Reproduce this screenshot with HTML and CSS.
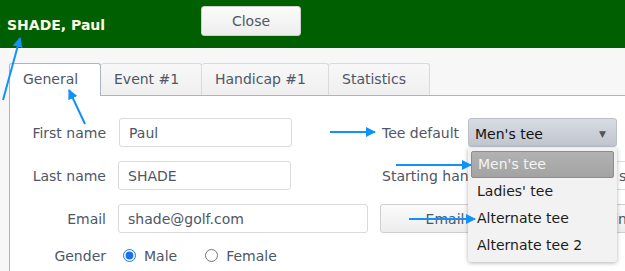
FILE: index.html
```html
<!DOCTYPE html>
<html lang="en">
<head>
    <meta charset="UTF-8">
    <title>Player - SHADE, Paul</title>
    <link rel="stylesheet" href="styles.css">
</head>
<body>
    <header class="top-bar">
        <span class="player-name">SHADE, Paul</span>
        <button class="btn close-btn">Close</button>
    </header>

    <main class="player-page">
        <nav class="tabs">
            <div class="tab active">General</div>
            <div class="tab">Event #1</div>
            <div class="tab wide">Handicap #1</div>
            <div class="tab">Statistics</div>
        </nav>

        <section class="panel">
            <div class="form-grid">
                <label class="field-label">First name</label>
                <div class="field"><input class="text-input short" type="text" value="Paul"></div>
                <label class="side-label">Tee default</label>
                <div class="select-wrap">
                    <div class="select-box">
                        <span>Men's tee</span>
                        <span class="caret">&#9660;</span>
                    </div>
                    <!-- open options list -->
                    <ul class="select-list">
                        <li class="option selected">Men's tee</li>
                        <li class="option">Ladies' tee</li>
                        <li class="option">Alternate tee</li>
                        <li class="option">Alternate tee 2</li>
                    </ul>
                </div>

                <label class="field-label">Last name</label>
                <div class="field"><input class="text-input short" type="text" value="SHADE"></div>
                <div class="side-row">
                    <span class="side-label hcp-label">Starting handicap</span>
                    <input class="text-input hcp-input" type="text" value="std">
                </div>

                <label class="field-label">Email</label>
                <div class="field"><input class="text-input" type="text" value="shade@golf.com"></div>
                <div class="side-row">
                    <button class="btn email-btn">Email</button>
                    <button class="btn email-btn login-btn">Login</button>
                </div>

                <label class="field-label">Gender</label>
                <div class="field radios">
                    <label class="radio"><input type="radio" name="gender" checked> Male</label>
                    <label class="radio"><input type="radio" name="gender"> Female</label>
                </div>
            </div>
        </section>
    </main>

    <!-- help arrows drawn over the screen -->
    <svg class="help-arrows" width="625" height="271" viewBox="0 0 625 271">
        <defs>
            <marker id="head" viewBox="0 0 10 10" refX="9" refY="5" markerWidth="5" markerHeight="5" orient="auto">
                <path d="M0,0 L10,5 L0,10 z" fill="#1191fa"/>
            </marker>
        </defs>
        <line x1="3" y1="100" x2="20" y2="38" marker-end="url(#head)"/>
        <line x1="85" y1="124" x2="69" y2="90" marker-end="url(#head)"/>
        <line x1="330" y1="132" x2="375" y2="132" marker-end="url(#head)"/>
        <line x1="396" y1="165" x2="471" y2="165" marker-end="url(#head)"/>
        <line x1="409" y1="219" x2="475" y2="219" marker-end="url(#head)"/>
    </svg>
</body>
</html>
```

FILE: styles.css
```css
html, body {
    width: 625px;
    height: 271px;
}

body {
    margin: 0;
    font-family: "DejaVu Sans", Verdana, sans-serif;
    font-size: 14px;
    background: #f7f7f7;
    color: #4f5666;
    overflow: hidden;
}

.top-bar {
    display: flex;
    align-items: center;
    height: 48px;
    padding-left: 7px;
    background: #005f00;
}

.player-name {
    width: 194px;
    font-weight: bold;
    color: #fffbe3;
    margin-top: 2px;
}

.btn {
    font-family: inherit;
    font-size: 14px;
    color: #4f5666;
    background: linear-gradient(#fbfbfb, #ededed);
    border: 1px solid #cfcfcf;
    border-radius: 3px;
    cursor: pointer;
}

.close-btn {
    width: 100px;
    height: 30px;
    margin-top: -6px;
}

.player-page {
    padding: 15px 0 0 9px;
}

.tabs {
    display: flex;
    height: 32px;
}

.tab {
    box-sizing: border-box;
    width: 101px;
    padding-top: 7px;
    padding-left: 13px;
    border: 1px solid #d9dadc;
    border-bottom: none;
    border-left: none;
    border-radius: 3px 3px 0 0;
    background: linear-gradient(#f8f8f8, #efefef);
}

.tab.active {
    width: 92px;
    border: 1px solid #aeb4bd;
    border-bottom: none;
    background: #fff;
    position: relative;
    z-index: 1;
    height: 33px;
}

.tab.wide {
    width: 127px;
}

.panel {
    background: #fff;
    border-top: 1px solid #aeb4bd;
    border-left: 1px solid #aeb4bd;
    height: 154px;
    padding-top: 22px;
    overflow: hidden;
}

.form-grid {
    display: grid;
    grid-template-columns: 96px 250px 76px 149px;
    grid-template-rows: 29px 29px 29px 17px;
    column-gap: 12px;
    row-gap: 14px;
}

.form-grid > :nth-child(2) {
    margin-left: 1px;
}

.field-label {
    text-align: right;
    align-self: center;
}

.field {
    display: flex;
    align-items: center;
}

.text-input {
    box-sizing: border-box;
    width: 250px;
    height: 29px;
    padding: 0 9px;
    font-family: inherit;
    font-size: 14px;
    color: #4f5666;
    border: 1px solid #dadada;
    border-radius: 3px;
    background: #fff;
}

.text-input.short {
    width: 173px;
}

.side-label {
    align-self: center;
    white-space: nowrap;
    padding-left: 2px;
}

.side-row {
    grid-column: 3 / 5;
    display: flex;
    align-items: center;
    gap: 10px;
    white-space: nowrap;
}

.hcp-label {
    width: 217px;
    flex: none;
}

.hcp-input {
    width: 120px;
    flex: none;
}

.email-btn {
    flex: none;
    height: 29px;
    width: 132px;
    padding-left: 4px;
}

.login-btn {
    width: 110px;
    text-align: right;
    padding-right: 4px;
}

.select-wrap {
    position: relative;
}

.select-box {
    box-sizing: border-box;
    height: 29px;
    display: flex;
    align-items: center;
    justify-content: space-between;
    padding: 2px 10px 0 6px;
    color: #111;
    background: linear-gradient(#d9dce3, #bfc4ce);
    border: 1px solid #b9bec8;
    border-radius: 3px;
}

.caret {
    font-size: 9px;
    color: #555;
}

.select-list {
    position: absolute;
    top: 30px;
    left: 0;
    z-index: 5;
    box-sizing: border-box;
    width: 149px;
    margin: 0;
    padding: 3px;
    list-style: none;
    background: #f2f2f2;
    border-radius: 0 0 3px 3px;
    box-shadow: 0 1px 4px rgba(0, 0, 0, 0.3);
}

.option {
    box-sizing: border-box;
    height: 27px;
    line-height: 27px;
    padding-left: 6px;
    color: #1c1c1c;
}

.option.selected {
    line-height: 25px;
    color: #f4f4f4;
    background: linear-gradient(#b2b2b2, #a3a3a3);
    border: 1px solid #8c8c8c;
    border-radius: 2px;
}

.radios {
    margin-left: 5px;
}

.radio {
    display: flex;
    align-items: center;
    gap: 4px;
    margin-right: 28px;
}

.radio input {
    margin: 0 4px 0 0;
    width: 13px;
    height: 13px;
    accent-color: #1a73e8;
}

.help-arrows {
    position: absolute;
    top: 0;
    left: 0;
    z-index: 10;
    pointer-events: none;
}

.help-arrows line {
    stroke: #1191fa;
    stroke-width: 2;
}
```
